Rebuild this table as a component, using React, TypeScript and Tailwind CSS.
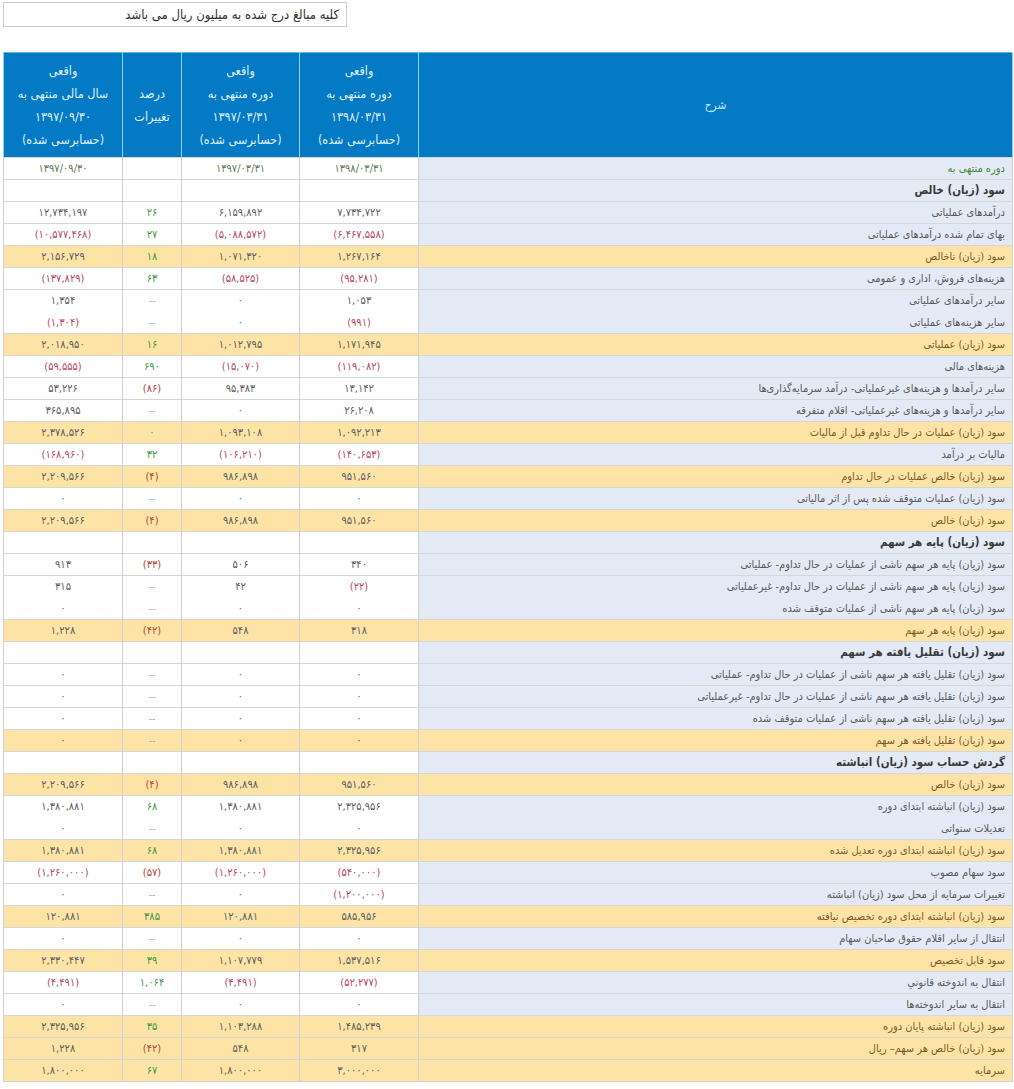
type Row = {
  label: string
  a?: string
  b?: string
  pct?: string
  c?: string
  kind?: "date" | "section" | "hl"
  noLine?: boolean
}

const Z = "۰"
const D = "--"

const rows: Row[] = [
  { label: "دوره منتهی به", a: "۱۳۹۸/۰۳/۳۱", b: "۱۳۹۷/۰۳/۳۱", pct: "", c: "۱۳۹۷/۰۹/۳۰", kind: "date" },
  { label: "سود (زیان) خالص", kind: "section" },
  { label: "درآمدهای عملیاتی", a: "۷,۷۳۴,۷۲۲", b: "۶,۱۵۹,۸۹۲", pct: "۲۶", c: "۱۲,۷۳۴,۱۹۷" },
  { label: "بهای تمام شده درآمدهای عملیاتی", a: "(۶,۴۶۷,۵۵۸)", b: "(۵,۰۸۸,۵۷۲)", pct: "۲۷", c: "(۱۰,۵۷۷,۴۶۸)" },
  { label: "سود (زیان) ناخالص", a: "۱,۲۶۷,۱۶۴", b: "۱,۰۷۱,۳۲۰", pct: "۱۸", c: "۲,۱۵۶,۷۲۹", kind: "hl" },
  { label: "هزینه‌های فروش، اداری و عمومی", a: "(۹۵,۲۸۱)", b: "(۵۸,۵۲۵)", pct: "۶۳", c: "(۱۳۷,۸۲۹)" },
  { label: "سایر درآمدهای عملیاتی", a: "۱,۰۵۳", b: Z, pct: D, c: "۱,۳۵۴" },
  { label: "سایر هزینه‌های عملیاتی", a: "(۹۹۱)", b: Z, pct: D, c: "(۱,۳۰۴)", noLine: true },
  { label: "سود (زیان) عملیاتی", a: "۱,۱۷۱,۹۴۵", b: "۱,۰۱۲,۷۹۵", pct: "۱۶", c: "۲,۰۱۸,۹۵۰", kind: "hl" },
  { label: "هزینه‌های مالی", a: "(۱۱۹,۰۸۲)", b: "(۱۵,۰۷۰)", pct: "۶۹۰", c: "(۵۹,۵۵۵)" },
  { label: "سایر درآمدها و هزینه‌های غیرعملیاتی- درآمد سرمایه‌گذاری‌ها", a: "۱۳,۱۴۲", b: "۹۵,۳۸۳", pct: "(۸۶)", c: "۵۳,۲۲۶" },
  { label: "سایر درآمدها و هزینه‌های غیرعملیاتی- اقلام متفرقه", a: "۲۶,۲۰۸", b: Z, pct: D, c: "۳۶۵,۸۹۵" },
  { label: "سود (زیان) عملیات در حال تداوم قبل از مالیات", a: "۱,۰۹۲,۲۱۳", b: "۱,۰۹۳,۱۰۸", pct: Z, c: "۲,۳۷۸,۵۲۶", kind: "hl" },
  { label: "مالیات بر درآمد", a: "(۱۴۰,۶۵۳)", b: "(۱۰۶,۲۱۰)", pct: "۳۲", c: "(۱۶۸,۹۶۰)" },
  { label: "سود (زیان) خالص عملیات در حال تداوم", a: "۹۵۱,۵۶۰", b: "۹۸۶,۸۹۸", pct: "(۴)", c: "۲,۲۰۹,۵۶۶", kind: "hl" },
  { label: "سود (زیان) عملیات متوقف شده پس از اثر مالیاتی", a: Z, b: Z, pct: D, c: Z },
  { label: "سود (زیان) خالص", a: "۹۵۱,۵۶۰", b: "۹۸۶,۸۹۸", pct: "(۴)", c: "۲,۲۰۹,۵۶۶", kind: "hl" },
  { label: "سود (زیان) پایه هر سهم", kind: "section" },
  { label: "سود (زیان) پایه هر سهم ناشی از عملیات در حال تداوم- عملیاتی", a: "۳۴۰", b: "۵۰۶", pct: "(۳۳)", c: "۹۱۳" },
  { label: "سود (زیان) پایه هر سهم ناشی از عملیات در حال تداوم- غیرعملیاتی", a: "(۲۲)", b: "۴۲", pct: D, c: "۳۱۵" },
  { label: "سود (زیان) پایه هر سهم ناشی از عملیات متوقف شده", a: Z, b: Z, pct: D, c: Z, noLine: true },
  { label: "سود (زیان) پایه هر سهم", a: "۳۱۸", b: "۵۴۸", pct: "(۴۲)", c: "۱,۲۲۸", kind: "hl" },
  { label: "سود (زیان) تقلیل یافته هر سهم", kind: "section" },
  { label: "سود (زیان) تقلیل یافته هر سهم ناشی از عملیات در حال تداوم- عملیاتی", a: Z, b: Z, pct: D, c: Z },
  { label: "سود (زیان) تقلیل یافته هر سهم ناشی از عملیات در حال تداوم- غیرعملیاتی", a: Z, b: Z, pct: D, c: Z },
  { label: "سود (زیان) تقلیل یافته هر سهم ناشی از عملیات متوقف شده", a: Z, b: Z, pct: D, c: Z },
  { label: "سود (زیان) تقلیل یافته هر سهم", a: Z, b: Z, pct: D, c: Z, kind: "hl" },
  { label: "گردش حساب سود (زیان) انباشته", kind: "section" },
  { label: "سود (زیان) خالص", a: "۹۵۱,۵۶۰", b: "۹۸۶,۸۹۸", pct: "(۴)", c: "۲,۲۰۹,۵۶۶", kind: "hl" },
  { label: "سود (زیان) انباشته ابتدای دوره", a: "۲,۳۲۵,۹۵۶", b: "۱,۳۸۰,۸۸۱", pct: "۶۸", c: "۱,۳۸۰,۸۸۱" },
  { label: "تعدیلات سنواتی", a: Z, b: Z, pct: D, c: Z, noLine: true },
  { label: "سود (زیان) انباشته ابتدای دوره تعدیل شده", a: "۲,۳۲۵,۹۵۶", b: "۱,۳۸۰,۸۸۱", pct: "۶۸", c: "۱,۳۸۰,۸۸۱", kind: "hl" },
  { label: "سود سهام مصوب", a: "(۵۴۰,۰۰۰)", b: "(۱,۲۶۰,۰۰۰)", pct: "(۵۷)", c: "(۱,۲۶۰,۰۰۰)" },
  { label: "تغییرات سرمایه از محل سود (زیان) انباشته", a: "(۱,۲۰۰,۰۰۰)", b: Z, pct: D, c: Z },
  { label: "سود (زیان) انباشته ابتدای دوره تخصیص نیافته", a: "۵۸۵,۹۵۶", b: "۱۲۰,۸۸۱", pct: "۳۸۵", c: "۱۲۰,۸۸۱", kind: "hl" },
  { label: "انتقال از سایر اقلام حقوق صاحبان سهام", a: Z, b: Z, pct: D, c: Z },
  { label: "سود قابل تخصیص", a: "۱,۵۳۷,۵۱۶", b: "۱,۱۰۷,۷۷۹", pct: "۳۹", c: "۲,۳۳۰,۴۴۷", kind: "hl" },
  { label: "انتقال به اندوخته قانوني", a: "(۵۲,۲۷۷)", b: "(۴,۴۹۱)", pct: "۱,۰۶۴", c: "(۴,۴۹۱)" },
  { label: "انتقال به سایر اندوخته‌ها", a: Z, b: Z, pct: D, c: Z },
  { label: "سود (زیان) انباشته پایان دوره", a: "۱,۴۸۵,۲۳۹", b: "۱,۱۰۳,۲۸۸", pct: "۳۵", c: "۲,۳۲۵,۹۵۶", kind: "hl" },
  { label: "سود (زیان) خالص هر سهم– ریال", a: "۳۱۷", b: "۵۴۸", pct: "(۴۲)", c: "۱,۲۲۸", kind: "hl" },
  { label: "سرمایه", a: "۳,۰۰۰,۰۰۰", b: "۱,۸۰۰,۰۰۰", pct: "۶۷", c: "۱,۸۰۰,۰۰۰", kind: "hl" },
]

function Value({ v, kind }: { v?: string; kind?: Row["kind"] }) {
  if (!v) return null
  if (kind === "date") return <span className="text-[#627a58]">{v}</span>
  if (v.startsWith("(")) return <span className="text-[#b8475f]">{v}</span>
  if (v === D) return <span className="text-[#aaa]">{v}</span>
  return <span className="text-[#5e5e5e]">{v}</span>
}

function Pct({ v }: { v?: string }) {
  if (!v) return null
  if (v.startsWith("(")) return <span className="text-[#b4483c]">{v}</span>
  if (v === D) return <span className="text-[#aaa] text-[10px]">{v}</span>
  return <span className="text-[#3e9a3e]">{v}</span>
}

function HeaderCell({ lines }: { lines: string[] }) {
  return (
    <th className="border-x border-[#8fd3f2] font-normal align-middle text-center text-[12.5px] leading-[23px] text-[#dff1ff]">
      {lines.map((l, i) => (
        <div key={i}>{l}</div>
      ))}
    </th>
  )
}

export default function App() {
  return (
    <div
      className="bg-white min-h-[1089px] pl-[3px] pt-[2px]"
      style={{ fontFamily: '"DejaVu Sans Condensed", "DejaVu Sans", sans-serif' }}
    >
      {/* note box */}
      <div
        dir="rtl"
        className="w-[344px] h-[25px] border border-[#cfcfcf] pr-[7px] text-[13px] leading-[23px] text-[#333]"
      >
        کلیه مبالغ درج شده به میلیون ریال می باشد
      </div>

      <table dir="rtl" className="mt-[25px] w-[1009px] table-fixed border-collapse text-[11px]">
        <colgroup>
          <col className="w-[594px]" />
          <col className="w-[119px]" />
          <col className="w-[118px]" />
          <col className="w-[59px]" />
          <col className="w-[119px]" />
        </colgroup>
        <thead>
          <tr className="h-[105px] bg-[#0479c4] border-t border-[#5cb8e6]">
            <th className="border-x border-[#8fd3f2] font-normal text-center text-[12px] text-[#bfe6ff]">شرح</th>
            <HeaderCell lines={["واقعی", "دوره منتهی به", "۱۳۹۸/۰۳/۳۱", "(حسابرسی شده)"]} />
            <HeaderCell lines={["واقعی", "دوره منتهی به", "۱۳۹۷/۰۳/۳۱", "(حسابرسی شده)"]} />
            <HeaderCell lines={["درصد", "تغییرات"]} />
            <HeaderCell lines={["واقعی", "سال مالی منتهی به", "۱۳۹۷/۰۹/۳۰", "(حسابرسی شده)"]} />
          </tr>
        </thead>
        <tbody>
          {rows.map((r, i) => {
            const hl = r.kind === "hl"
            const line = r.noLine ? "border-t-transparent" : "border-t-[#d6d6d6]"
            const cell = `h-[22px] p-0 text-center border-t border-x border-x-[#d0d0d0] ${line} ${hl ? "bg-[#fde4a6]" : "bg-white"}`
            return (
              <tr key={i} className="h-[22px] leading-[21px]">
                <td
                  className={`h-[22px] py-0 pr-[7px] text-right whitespace-nowrap border-t border-x border-x-[#d0d0d0] ${line} ${
                    hl ? "bg-[#fde4a6] text-[#7d5b2b]" : "bg-[#e3eaf6]"
                  } ${r.kind === "section" ? "font-bold text-[11.5px] text-[#3a3a3a]" : ""} ${
                    r.kind === "date" ? "text-[#3f8a3a]" : ""
                  } ${!hl && !r.kind ? "text-[#5a5a5a]" : ""}`}
                >
                  {r.label}
                </td>
                <td className={cell}>
                  <Value v={r.a} kind={r.kind} />
                </td>
                <td className={cell}>
                  <Value v={r.b} kind={r.kind} />
                </td>
                <td className={cell}>
                  <Pct v={r.pct} />
                </td>
                <td className={cell}>
                  <Value v={r.c} kind={r.kind} />
                </td>
              </tr>
            )
          })}
          <tr className="h-0">
            <td colSpan={5} className="border-t border-[#d0d0d0] p-0" />
          </tr>
        </tbody>
      </table>
    </div>
  )
}
